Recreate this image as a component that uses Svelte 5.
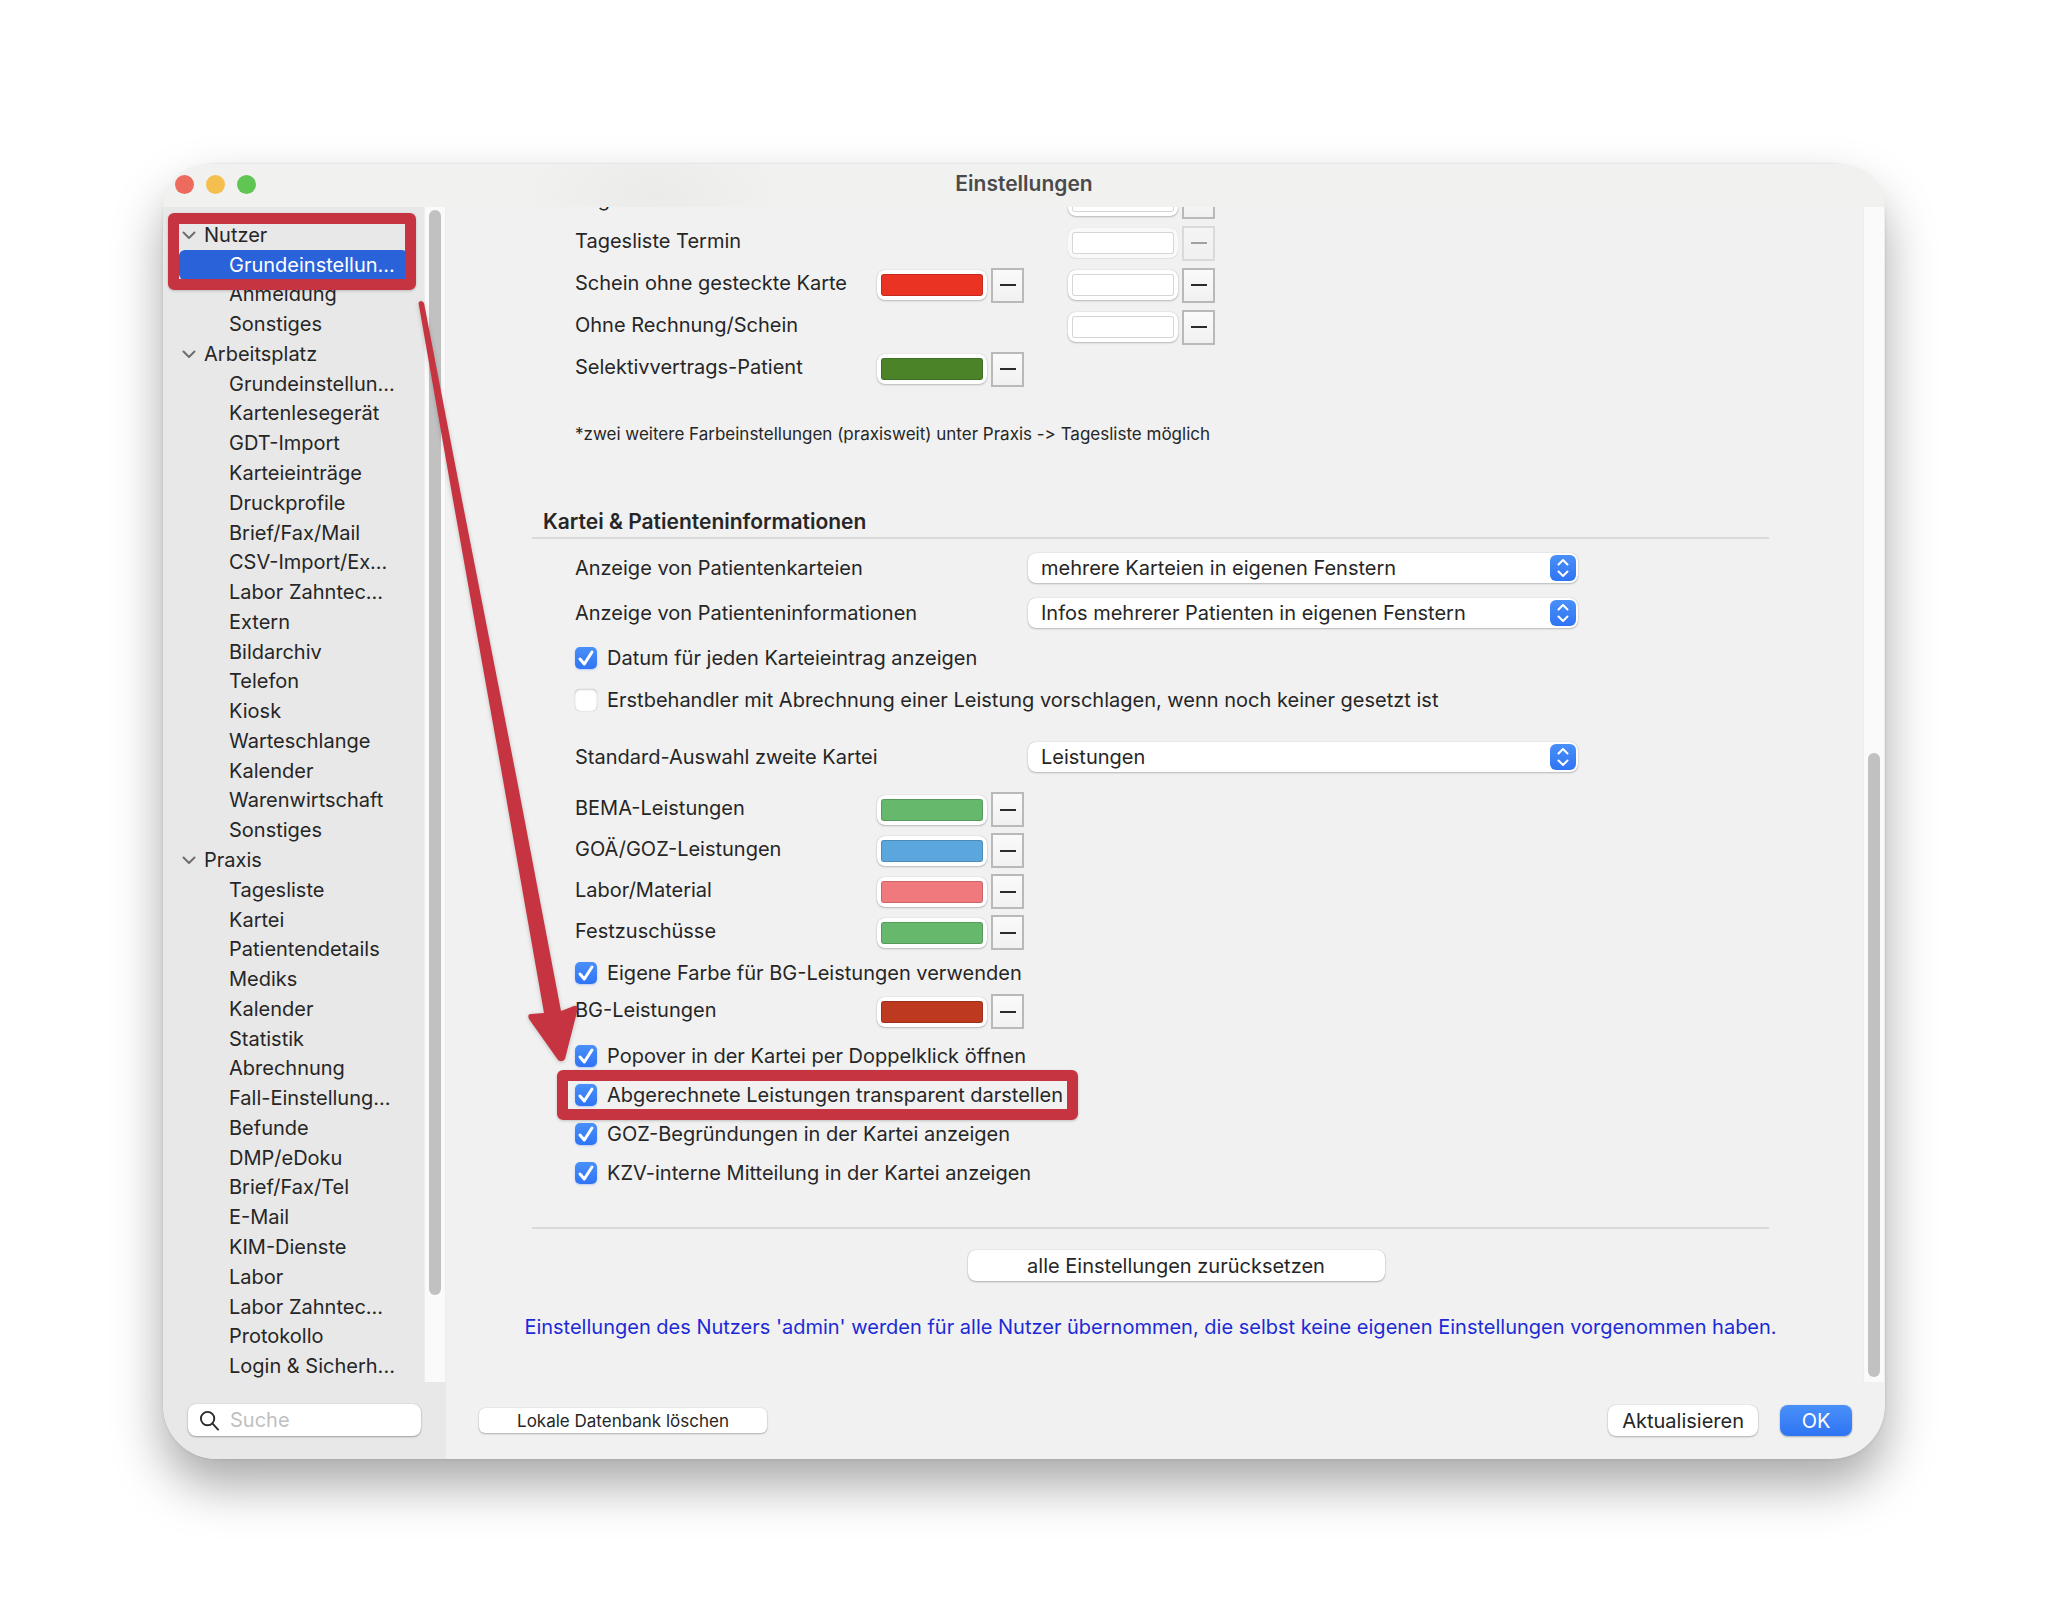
<script>
  const tree = [
    { name: 'Nutzer', items: ['Grundeinstellun...', 'Anmeldung', 'Sonstiges'] },
    {
      name: 'Arbeitsplatz',
      items: [
        'Grundeinstellun...', 'Kartenlesegerät', 'GDT-Import', 'Karteieinträge', 'Druckprofile',
        'Brief/Fax/Mail', 'CSV-Import/Ex...', 'Labor Zahntec...', 'Extern', 'Bildarchiv', 'Telefon',
        'Kiosk', 'Warteschlange', 'Kalender', 'Warenwirtschaft', 'Sonstiges'
      ]
    },
    {
      name: 'Praxis',
      items: [
        'Tagesliste', 'Kartei', 'Patientendetails', 'Mediks', 'Kalender', 'Statistik', 'Abrechnung',
        'Fall-Einstellung...', 'Befunde', 'DMP/eDoku', 'Brief/Fax/Tel', 'E-Mail', 'KIM-Dienste',
        'Labor', 'Labor Zahntec...', 'Protokollo', 'Login & Sicherh...'
      ]
    }
  ];
  const rows = tree.flatMap((g, gi) => [
    { text: g.name, head: true },
    ...g.items.map((text, i) => ({ text, head: false, selected: gi === 0 && i === 0 }))
  ]);

  const dayColors = [
    { label: 'Tagesliste Besonderheit', second: true },
    { label: 'Tagesliste Termin', second: true, disabled: true },
    { label: 'Schein ohne gesteckte Karte', color: '#eb3323', second: true },
    { label: 'Ohne Rechnung/Schein', second: true },
    { label: 'Selektivvertrags-Patient', color: '#4b8428' }
  ];
  const serviceColors = [
    { label: 'BEMA-Leistungen', color: '#66b86c' },
    { label: 'GOÄ/GOZ-Leistungen', color: '#5aa6dd' },
    { label: 'Labor/Material', color: '#ef797d' },
    { label: 'Festzuschüsse', color: '#66b86c' }
  ];
  const ownColor = [{ label: 'BG-Leistungen', color: '#bd3a20' }];
  const options = [
    { label: 'Popover in der Kartei per Doppelklick öffnen' },
    { label: 'Abgerechnete Leistungen transparent darstellen', marked: true },
    { label: 'GOZ-Begründungen in der Kartei anzeigen' },
    { label: 'KZV-interne Mitteilung in der Kartei anzeigen' }
  ];
</script>

{#snippet check(label, checked, marked)}
  <label class="check" class:marked>
    <span class="box">
      <input type="checkbox" {checked} />
      {#if checked}
        <svg viewBox="0 0 22 22" aria-hidden="true"><path d="M5 12 9.300 17 17 5" /></svg>
      {/if}
    </span>
    {label}
  </label>
{/snippet}

{#snippet popup(id, label, value)}
  <div class="field">
    <label for={id}>{label}</label>
    <div class="popup">
      <select {id}><option>{value}</option></select>
      <svg viewBox="0 0 26 26" aria-hidden="true">
        <path d="M8.500 9.500 13 5l4.500 4.500M8.500 16.500 13 21l4.500-4.500" />
      </svg>
    </div>
  </div>
{/snippet}

{#snippet well(label, value, disabled)}
  <div class="well-pair">
    <input type="color" {value} {disabled} aria-label={label} />
    <button class="minus" {disabled} aria-label="{label} entfernen"><span></span></button>
  </div>
{/snippet}

{#snippet colorRows(list)}
  {#each list as row}
    <div class="color-row">
      <span class="name">{row.label}</span>
      <div class="cell">{#if row.color}{@render well(row.label, row.color, false)}{/if}</div>
      <div class="cell">{#if row.second}{@render well(row.label + ' Hintergrund', '#ffffff', !!row.disabled)}{/if}</div>
    </div>
  {/each}
{/snippet}

<div class="desktop">
  <div class="window">
    <header>
      <div class="lights"><button class="close" aria-label="Schließen"></button><button class="min" aria-label="Minimieren"></button><button class="max" aria-label="Maximieren"></button></div>
      <h1>Einstellungen</h1>
    </header>

    <div class="body">
      <aside>
        <div class="tree-area">
          <nav>
            {#each rows as row}
              <button class="item" class:head={row.head} class:selected={row.selected}>
                {#if row.head}
                  <svg viewBox="0 0 14 14" aria-hidden="true"><path d="M1.500 4.500 7 10l5.500-5.500" /></svg>
                {/if}
                {row.text}
              </button>
            {/each}
            <div class="frame"></div>
          </nav>
          <div class="track"><div class="thumb tree-thumb"></div></div>
        </div>
        <div class="search">
          <svg viewBox="0 0 22 22" aria-hidden="true"><circle cx="9" cy="9" r="7" /><path d="M14 14 20 20.500" /></svg>
          <input type="text" placeholder="Suche" aria-label="Suche" />
        </div>
      </aside>

      <main>
        <div class="scroll">
          <div class="content">
            <div class="group day">{@render colorRows(dayColors)}</div>
            <p class="note">*zwei weitere Farbeinstellungen (praxisweit) unter Praxis -&gt; Tagesliste möglich</p>

            <h2>Kartei &amp; Patienteninformationen</h2>
            <div class="group">
              <div class="fields">
                {@render popup('karteien', 'Anzeige von Patientenkarteien', 'mehrere Karteien in eigenen Fenstern')}
                {@render popup('infos', 'Anzeige von Patienteninformationen', 'Infos mehrerer Patienten in eigenen Fenstern')}
              </div>
              <div class="checks first">
                {@render check('Datum für jeden Karteieintrag anzeigen', true, false)}
                {@render check('Erstbehandler mit Abrechnung einer Leistung vorschlagen, wenn noch keiner gesetzt ist', false, false)}
              </div>
              {@render popup('zweite', 'Standard-Auswahl zweite Kartei', 'Leistungen')}
              <div class="services">{@render colorRows(serviceColors)}</div>
              {@render check('Eigene Farbe für BG-Leistungen verwenden', true, false)}
              <div class="own">{@render colorRows(ownColor)}</div>
              <div class="checks">
                {#each options as o}{@render check(o.label, true, !!o.marked)}{/each}
              </div>
            </div>

            <div class="reset"><button class="push">alle Einstellungen zurücksetzen</button></div>
            <p class="hint">Einstellungen des Nutzers 'admin' werden für alle Nutzer übernommen, die selbst keine eigenen Einstellungen vorgenommen haben.</p>
          </div>
          <div class="track"><div class="thumb main-thumb"></div></div>
        </div>
        <footer>
          <button class="push small">Lokale Datenbank löschen</button>
          <button class="push">Aktualisieren</button>
          <button class="push primary">OK</button>
        </footer>
      </main>
    </div>

    <svg class="arrow" viewBox="0 0 440 920" aria-hidden="true">
      <path d="M255.500 139Q257.500 135 261 139L299 336L354 616L398 847L411 842Q415 841 414.500 846L402 895Q399 899 395 896L366 855Q364 850 368 850L381 849L340 616L290 336Z" />
    </svg>
  </div>
</div>

<style>
  :global(body) {
    margin: 0;
    background: #fff;
  }
  .desktop {
    padding: 164px 163px;
    font-family: Inter, 'Liberation Sans', sans-serif;
    font-size: 20px;
    line-height: 24px;
    color: #262626;
  }
  .desktop * {
    box-sizing: border-box;
  }
  button,
  input,
  select {
    font: inherit;
    color: inherit;
    border: 0;
    margin: 0;
    padding: 0;
  }
  .window {
    position: relative;
    border-radius: 54px;
    background: #f1f1f1;
    box-shadow: 0 0 3px rgba(0, 0, 0, 0.12), 0 26px 50px rgba(0, 0, 0, 0.34);
  }
  header {
    display: grid;
    grid-template-columns: 1fr auto 1fr;
    align-items: center;
    height: 43px;
    padding: 0 12px 3px;
    border-radius: 54px 54px 0 0;
    background: radial-gradient(ellipse 130px 60px at 490px 30px, #ebebe9, #f1f1ef);
  }
  .lights {
    display: flex;
    gap: 12px;
  }
  .lights button {
    width: 19px;
    height: 19px;
    border-radius: 50%;
  }
  .close {
    background: #ec6a5e;
  }
  .min {
    background: #f4bf4f;
  }
  .max {
    background: #61c554;
  }
  h1 {
    margin: 0;
    font-size: 21px;
    line-height: 24px;
    font-weight: 600;
    color: #4a4a4a;
  }
  .body {
    display: flex;
  }
  aside {
    flex: 0 0 283px;
    min-width: 0;
    display: flex;
    flex-direction: column;
    background: #e8e8e8;
    border-bottom-left-radius: 54px;
  }
  .tree-area {
    flex: 1;
    display: flex;
  }
  nav {
    position: relative;
    flex: 1;
    min-width: 0;
    display: grid;
    grid-auto-rows: 1fr;
    padding: 13px 16px 1px;
  }
  .item {
    display: flex;
    align-items: center;
    padding-left: 50px;
    background: none;
    text-align: left;
    white-space: nowrap;
  }
  .head {
    gap: 8px;
    padding-left: 3px;
  }
  .head svg {
    width: 14px;
    height: 14px;
    fill: none;
    stroke: #6e6e6e;
    stroke-width: 2;
    stroke-linecap: round;
    stroke-linejoin: round;
  }
  .selected {
    background: #2962d9;
    color: #fff;
    border-radius: 6px;
  }
  .frame {
    position: absolute;
    top: 6px;
    left: 5px;
    width: 248px;
    height: 77px;
    border: 11px solid #c53440;
    border-radius: 6px;
    box-shadow: 0 1px 3px rgba(0, 0, 0, 0.2);
  }
  .track {
    flex: 0 0 22px;
    background: #fafafa;
    border-left: 1px solid #ededed;
    border-right: 1px solid #ededed;
    padding: 3px 4px 5px;
    display: flex;
    flex-direction: column;
  }
  .thumb {
    width: 12px;
    border-radius: 6px;
    background: #c1c1c1;
  }
  .tree-thumb {
    height: 93%;
  }
  .main-thumb {
    height: 53.5%;
    margin-top: auto;
  }
  .search {
    display: flex;
    align-items: center;
    gap: 10px;
    height: 32px;
    margin: 22px 25px 23px;
    padding: 0 11px;
    border-radius: 8px;
    background: #fff;
    box-shadow: 0 0 1px rgba(0, 0, 0, 0.25), 0 1px 2px rgba(0, 0, 0, 0.3);
  }
  .search svg {
    flex: none;
    width: 21px;
    height: 21px;
    fill: none;
    stroke: #2b2b2b;
    stroke-width: 2;
    stroke-linecap: round;
  }
  .search input {
    width: 100%;
    min-width: 0;
    background: none;
    outline: none;
  }
  .search input::placeholder {
    color: #c0c0c0;
    opacity: 1;
  }
  main {
    flex: 1;
    min-width: 0;
    display: flex;
    flex-direction: column;
  }
  .scroll {
    display: flex;
    overflow: hidden;
  }
  .content {
    flex: 1;
    min-width: 0;
    padding: 0 94px 43px 86px;
  }
  .group {
    padding: 0 43px;
  }
  .day {
    margin-top: -27px;
  }
  .color-row {
    display: grid;
    grid-template-columns: 302px 191px 1fr;
    align-items: center;
    height: 41px;
  }
  .day .color-row {
    height: 42px;
  }
  .name {
    padding-bottom: 4px;
  }
  .well-pair {
    display: flex;
    align-items: center;
    gap: 4px;
  }
  input[type='color'] {
    appearance: none;
    width: 110px;
    height: 30px;
    padding: 4px;
    border-radius: 8px;
    background: #fff;
    box-shadow: 0 0 1px rgba(0, 0, 0, 0.25), 0 1px 2px rgba(0, 0, 0, 0.22);
  }
  input[type='color']:disabled {
    background: #f9f9f9;
    box-shadow: 0 0 1px rgba(0, 0, 0, 0.15), 0 1px 1px rgba(0, 0, 0, 0.06);
  }
  input[type='color']::-webkit-color-swatch-wrapper {
    padding: 0;
  }
  input[type='color']::-webkit-color-swatch {
    border: 1px solid rgba(0, 0, 0, 0.16);
    border-radius: 3px;
  }
  .minus {
    display: grid;
    place-items: center;
    width: 33px;
    height: 35px;
    border: 2px solid #b9b9b9;
    background: linear-gradient(#fafafa, #f1f1f1);
  }
  .minus:disabled {
    opacity: 0.4;
  }
  .minus span {
    width: 16px;
    height: 2px;
    background: #2b2b2b;
  }
  .note {
    margin: 32px 43px 0;
    font-size: 17px;
    line-height: 24px;
    font-variant-ligatures: none;
  }
  h2 {
    margin: 63px 0 14px;
    padding: 0 11px 2px;
    border-bottom: 2px solid #dadada;
    font-size: 21px;
    line-height: 26px;
    font-weight: 600;
  }
  .fields {
    display: grid;
    gap: 15px;
  }
  .field {
    display: grid;
    grid-template-columns: 453px 550px;
    align-items: center;
  }
  .popup {
    display: grid;
    align-items: center;
    justify-items: end;
  }
  .popup > * {
    grid-area: 1 / 1;
  }
  .popup select {
    appearance: none;
    width: 100%;
    height: 30px;
    padding: 0 40px 0 13px;
    border-radius: 8px;
    background: #fff;
    box-shadow: 0 0 1px rgba(0, 0, 0, 0.25), 0 1px 2px rgba(0, 0, 0, 0.22);
  }
  .popup svg {
    width: 26px;
    height: 26px;
    margin-right: 2px;
    border-radius: 6px;
    background: linear-gradient(#4a90f8, #2f74f4);
    pointer-events: none;
    fill: none;
    stroke: #fff;
    stroke-width: 2;
    stroke-linecap: round;
    stroke-linejoin: round;
  }
  .checks {
    display: grid;
    justify-items: start;
    gap: 15px;
  }
  .first {
    gap: 18px;
    margin: 18px 0 30px;
  }
  .check {
    position: relative;
    display: inline-flex;
    align-items: center;
    gap: 10px;
  }
  .box {
    display: grid;
    width: 22px;
    height: 22px;
  }
  .box > * {
    grid-area: 1 / 1;
  }
  .box input {
    appearance: none;
    width: 22px;
    height: 22px;
    border-radius: 5px;
    background: #fff;
    box-shadow: inset 0 1px 2px rgba(0, 0, 0, 0.18), 0 0 1px rgba(0, 0, 0, 0.35);
  }
  .box input:checked {
    background: linear-gradient(#4a90f8, #2f74f4);
    box-shadow: 0 1px 2px rgba(47, 116, 244, 0.3);
  }
  .box svg {
    pointer-events: none;
    fill: none;
    stroke: #fff;
    stroke-width: 3;
    stroke-linecap: round;
    stroke-linejoin: round;
  }
  .marked::after {
    content: '';
    position: absolute;
    inset: -13px -15px -13px -18px;
    border: 11px solid #c53440;
    border-radius: 6px;
    box-shadow: 0 1px 3px rgba(0, 0, 0, 0.2);
  }
  .services {
    margin: 17px 0 8px;
  }
  .own {
    margin: 2px 0 12px;
  }
  .reset {
    display: flex;
    justify-content: center;
    margin-top: 42px;
    padding: 21px 0 0 51px;
    border-top: 2px solid #dadada;
  }
  .push {
    height: 31px;
    padding: 0 14px;
    border-radius: 8px;
    background: #fff;
    box-shadow: 0 0 1px rgba(0, 0, 0, 0.25), 0 1px 2px rgba(0, 0, 0, 0.25);
  }
  .reset .push {
    width: 417px;
  }
  .hint {
    margin: 34px -43px 0;
    text-align: center;
    white-space: nowrap;
    color: #1d2bd6;
  }
  footer {
    display: flex;
    align-items: center;
    gap: 22px;
    height: 77px;
    padding: 0 33px;
  }
  .small {
    height: 25px;
    width: 288px;
    margin-right: auto;
    border-radius: 6px;
    font-size: 17px;
  }
  .primary {
    width: 72px;
    padding: 0;
    background: linear-gradient(#4a90f8, #2f74f4);
    color: #fff;
  }
  .arrow {
    position: absolute;
    top: 0;
    left: 0;
    width: 440px;
    height: 920px;
    fill: #c53440;
    pointer-events: none;
    filter: drop-shadow(0 1px 2px rgba(0, 0, 0, 0.2));
  }
</style>
